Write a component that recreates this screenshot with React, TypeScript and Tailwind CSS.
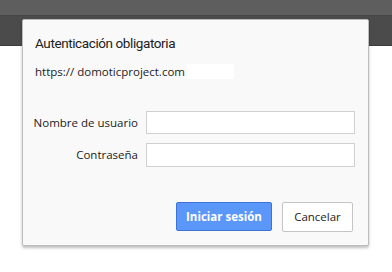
export default function App() {
  return (
    <div className="relative w-[392px] h-[272px] bg-white overflow-hidden" style={{ fontFamily: '"Open Sans", "Noto Sans", sans-serif' }}>
      {/* browser chrome */}
      <div className="h-[16px] bg-[#5e5e5e] border-b border-[#464646]" />
      <div className="h-[30px] bg-[#4b4b4b] border-b border-[#3c3c3c]" />

      {/* auth dialog */}
      <div className="absolute left-[22px] top-[19px] w-[347px] h-[227px] bg-[#f9f9f9] border border-[#bcbcbc] rounded-[2px] shadow-[0_2px_3px_rgba(0,0,0,0.25)] flex flex-col">
        <div className="pl-[12px] pt-[13px] text-[13.5px] leading-[20px] tracking-[-0.4px] text-[#222] font-['Roboto',sans-serif]">Autenticación obligatoria</div>
        <div className="pl-[12px] mt-[11px] flex items-center text-[11.5px] leading-[15px] text-[#222]">
          <span>https:// domoticproject.com</span>
          <span className="ml-[2px] w-[47px] h-[15px] bg-white" />
        </div>

        <div className="mt-[32px] flex flex-col gap-[9px]">
          <div className="flex items-center">
            <label className="w-[123px] pr-[8px] text-right text-[11.5px] text-[#222] whitespace-nowrap">Nombre de usuario</label>
            <div className="w-[209px] h-[23px] bg-white border border-[#d0d0d0]" />
          </div>
          <div className="flex items-center">
            <label className="w-[123px] pr-[8px] text-right text-[11.5px] text-[#222] whitespace-nowrap">Contraseña</label>
            <div className="w-[209px] h-[24px] bg-white border border-[#d0d0d0]" />
          </div>
        </div>

        <div className="mt-auto mb-[13px] mr-[15px] flex justify-end gap-[10px]">
          <button className="w-[96px] h-[29px] bg-[#5b97f9] border border-[#3d73d6] rounded-[2px] text-white text-[11.5px] font-bold">Iniciar sesión</button>
          <button className="w-[71px] h-[30px] bg-white border border-[#c4c4c4] rounded-[2px] text-[#222] text-[11.5px]">Cancelar</button>
        </div>
      </div>
    </div>
  )
}
